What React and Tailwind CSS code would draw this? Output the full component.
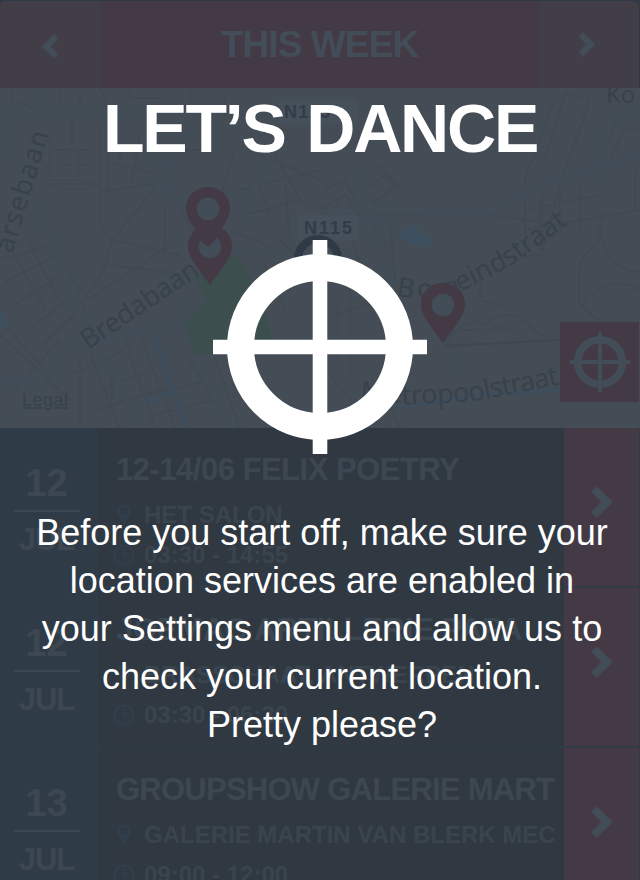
const sans = "font-['Liberation_Sans',Arial,sans-serif]";

const events = [
  { day: '12', month: 'JUL', title: '12-14/06 FELIX POETRY', place: 'HET SALON', time: '03:30 - 14:55', titleGap: 'tracking-[-0.5px]' },
  { day: '12', month: 'JUL', title: 'JOEMAC ARTILLERIE PAPA', place: 'BRASSCHAAT, ANTWERPEN', time: '03:30 - 06:30', titleGap: 'tracking-[-0.3px]' },
  { day: '13', month: 'JUL', title: 'GROUPSHOW GALERIE MART', place: 'GALERIE MARTIN VAN BLERK MEC', time: '09:00 - 12:00', titleGap: 'tracking-[-0.75px]' },
];

function Chevron({ className, left }) {
  return (
    <svg viewBox="0 0 24 32" className={className} fill="none" stroke="#424d58" strokeWidth="8">
      <path d={left ? 'M20 3 7 16 20 29' : 'M4 3 17 16 4 29'} />
    </svg>
  );
}

function Crosshair({ className, color }) {
  return (
    <svg viewBox="0 0 214 214" className={className} fill="none" stroke={color}>
      <circle cx="107" cy="107" r="79.5" strokeWidth="27" />
      <path d="M107 0V214M0 107H214" strokeWidth="14.6" />
    </svg>
  );
}

function Pin({ x, y }) {
  return (
    <g transform={`translate(${x} ${y})`}>
      <path
        fillRule="evenodd"
        fill="#443a46"
        d="M0 0C12.500 0 22 9.500 22 21.500C22 32 13 42 0 60C-13 42-22 32-22 21.500C-22 9.500-12.500 0 0 0ZM0 10.500A11.300 11.300 0 1 0 0 33.100A11.300 11.300 0 1 0 0 10.500Z"
      />
    </g>
  );
}

function CityMap() {
  return (
    <svg viewBox="0 88 640 340" className="block h-[340px] w-full bg-[#444c55]" fill="none">
      <g stroke="#414a53" strokeWidth="2">
        <path d="M12 88V100L42 112M60 88V104M80 92V112M100 88 110 112M130 88V98H160M190 88V105M225 95V120M50 140V180H78V150H50M62 150H90M58 165H88M62 190H84M72 120V145M100 128V184M100 184H42M100 184V225L112 240L104 270L80 305M100 192 160 183M108 150V190M118 145 145 150M112 163 150 172M120 140V170M140 135 132 180M160 183 112 240M112 240 180 255M110 265 190 275M88 300 170 245" />
        <path d="M0 260 50 245 80 290M12 250 45 310M28 242 62 305M5 282 55 256M14 305 70 270M30 330 78 290M42 345 85 305M0 320 40 365M0 335 70 400M15 390 60 340M80 360V428M70 375 125 350M90 355 120 428M100 390 150 370M95 410 175 385M125 340 155 428M140 335 175 428M112 365V400M150 395 210 380M155 415 215 400M190 360 230 428M210 345 240 428" />
        <path d="M160 183V150H210M165 205V255M180 210 205 250M235 150 210 230M260 155 320 180M240 190 320 170M255 175 270 215M245 215 300 200M285 185 290 240M270 145 300 200M230 230 280 250M280 240 300 260M265 265 285 310" />
        <path d="M320 210 345 195 360 215M325 190 345 180 355 200M335 205 350 220M365 190 385 175 398 190M380 165 398 185 370 205M345 220 360 265M370 222 390 250M390 220 395 280M380 215 470 212 540 222M525 255V215M540 200V250M525 230 640 210M560 190V235M580 182V228M525 210 600 195M635 170V210M525 255H542V195M525 255V178L555 100M542 250 560 185L590 100L565 93L545 160M605 150 615 120 640 105M608 165C620 140 622 120 640 130M602 228C600 250 580 250 579 270L579 303L600 322M600 220C600 260 620 270 640 272M582 305C600 280 625 280 640 290M325 310V350M338 300V360M335 315 380 300M320 340 385 340M350 290V375M445 342C455 330 470 315 485 325M485 325C495 315 510 310 525 322L545 338M455 330H478M490 332C500 325 510 328 518 335M480 280V300L502 306M330 375 350 400M380 380 400 428M350 410 390 428" />
      </g>
      <g stroke="#424d58" strokeWidth="7">
        <path d="M0 103 20 112 95 114 155 112 215 108 290 118 330 115" />
        <path d="M14 112V155L40 215L98 355 120 382 140 428M40 88V112M152 115 162 185 190 208 220 238M162 175 192 130M235 232 275 145M0 388 50 372 68 345 182 324M50 372 62 382M0 375 40 390 8 425M172 272 180 320 230 428M355 165 370 210M325 212 370 208 485 213 540 185 640 155M598 182V165L610 120 640 110M320 220 400 223" />
        <path d="M445 345C455 360 460 380 480 415M375 215 395 300M355 290 395 295M215 252 285 248" strokeWidth="4" />
        <circle cx="163" cy="184" r="7" strokeWidth="5" />
      </g>
      <path fill="#3d4e4e" d="M193 278 236 254 250 276 252 292 268 320 271 341 234 347 200 356Q195 356 193 351L184 325 206 303 204 294Z" />
      <path stroke="#3e4f5e" strokeWidth="6" d="M155 338 170 385 188 428M144 403 170 392M232 318 252 300" strokeOpacity=".7" />
      <path fill="#3d5060" d="M397 236 408 226 418 228 424 236 435 241 430 245 422 243 420 248 410 242Z M0 310 8 328 0 325Z" />
      <path stroke="#3e4e5c" strokeWidth="4" d="M380 402 400 406 430 403 500 393 560 390" />
      <path stroke="#3f4851" strokeWidth="2" d="M445 346 560 340" />
      <g fontSize="27" fill="#38424b" className="font-['Noto_Sans','Open_Sans',sans-serif]">
        <text transform="translate(12 254) rotate(-73)" textLength="126">arsebaan</text>
        <text transform="translate(88 350) rotate(-34)" textLength="136">Bredabaan</text>
        <text transform="translate(396 296) rotate(8)">B</text>
        <text transform="translate(418 299) rotate(-8)">o</text>
        <text transform="translate(434 300) rotate(-16)">r</text>
        <text transform="translate(446 298) rotate(-20)">g</text>
        <text transform="translate(460 292) rotate(-27)" textLength="55">eind</text>
        <text transform="translate(509 267) rotate(-36)" textLength="73">straat</text>
        <text transform="translate(360 400) rotate(4)" textLength="42">Me</text>
        <text transform="translate(402 405) rotate(-3)" textLength="68">tropo</text>
        <text transform="translate(470 402) rotate(-11)" textLength="91">olstraat</text>
        <text x="606" y="103" fontSize="24">Ko</text>
      </g>
      <g fontSize="18" fontWeight="700" className="font-['Liberation_Sans',Arial,sans-serif]">
        <rect x="279" y="99" width="79" height="25" rx="3" fill="#46505a" />
        <text x="284" y="118" fill="#323c47" textLength="46">N115</text>
        <rect x="299" y="215" width="59" height="26" rx="3" fill="#46505a" />
        <text x="304" y="234" fill="#323c47" textLength="48">N115</text>
      </g>
      <circle cx="318" cy="259" r="20" stroke="#2f3a46" strokeWidth="8" />
      <Pin x={208} y={187} />
      <circle cx="208" cy="209" r="11" fill="#424d57" />
      <Pin x={210} y={225} />
      <circle cx="210" cy="247" r="11" fill="#424d57" />
      <path d="M200 240 208.500 247 217 238 210 236Z" fill="#443a46" />
      <Pin x={443} y={283} />
      <circle cx="443" cy="305" r="11" fill="#424d57" />
      <text x="22" y="406" fontSize="18" fill="#38424b" textLength="46" textDecoration="underline" className="font-['Liberation_Sans',Arial,sans-serif]">Legal</text>
    </svg>
  );
}

function EventRow({ event }) {
  return (
    <div className="flex h-[160px] bg-[#2f3b46] pb-[2px] font-bold text-[#3d4751]">
      <div className="flex w-[98px] shrink-0 flex-col items-center bg-[#2f3b47] pr-[5px] pt-[35px]">
        <div className="text-[38px] leading-[40px]">{event.day}</div>
        <div className="mt-[7px] h-[2px] w-[66px] bg-[#3d4751]" />
        <div className="mt-[10px] text-[31px] leading-[36px] tracking-[-1px]">{event.month}</div>
      </div>
      <div className="w-[466px] shrink-0 overflow-hidden whitespace-nowrap bg-[#303942] pl-[18px] pt-[24px]">
        <div className={`text-[31px] leading-[36px] ${event.titleGap}`}>{event.title}</div>
        <div className="mt-[12px] flex h-[30px] items-center text-[24px] text-[#3a444e]">
          <svg viewBox="0 0 16 22" className="mr-[12px] h-[22px] w-[16px]" fill="#303e4b">
            <path fillRule="evenodd" d="M8 0A7.200 7.200 0 0 1 15 7.500C15 11 12.500 13 8 22C3.500 13 1 11 1 7.500A7.200 7.200 0 0 1 8 0ZM8 3.200A4.200 4.200 0 1 0 8 11.600A4.200 4.200 0 1 0 8 3.200Z" />
          </svg>
          {event.place}
        </div>
        <div className="mt-[10px] flex h-[30px] items-center text-[24px] text-[#3a444e]">
          <svg viewBox="0 0 22 22" className="-ml-[3px] mr-[9px] h-[22px] w-[22px]" fill="none" stroke="#303e4b" strokeWidth="2.500">
            <circle cx="11" cy="11" r="9.500" />
            <path d="M11 5V11H16" />
          </svg>
          {event.time}
        </div>
      </div>
      <div className="flex w-[75px] items-center justify-center bg-[#433a46]">
        <Chevron className="mt-[-11px] h-[32px] w-[24px]" />
      </div>
    </div>
  );
}

export default function App() {
  return (
    <div className={`relative h-[880px] w-[640px] overflow-hidden bg-[#303a46] ${sans}`}>
      <header className="flex h-[88px] pt-px">
        <div className="flex w-[100px] items-center justify-center rounded-tl-md bg-[#423e48]">
          <Chevron left className="mt-[3px] h-[25px] w-[20px]" />
        </div>
        <div className="flex w-[439px] items-center justify-center bg-[#433a46] text-[37px] font-bold tracking-[-0.9px] text-[#424d58]">
          THIS WEEK
        </div>
        <div className="flex w-[100px] items-center justify-center rounded-tr-md bg-[#423e48]">
          <Chevron className="-mt-px ml-[-4px] h-[25px] w-[20px]" />
        </div>
      </header>
      <div className="relative">
        <CityMap />
        <div className="absolute right-[1px] top-[234px] flex h-[80px] w-[79px] items-center justify-center bg-[#433a46]">
          <Crosshair className="h-[60px] w-[60px]" color="#424d58" />
        </div>
      </div>
      {events.map((event) => (
        <EventRow key={event.title} event={event} />
      ))}
      <section className="absolute inset-0 flex flex-col items-center text-center text-white">
        <h1 className="mt-[90px] whitespace-nowrap text-[68px] font-bold leading-[76px] tracking-[-2.2px] [word-spacing:5px]">LET’S DANCE</h1>
        <Crosshair className="mt-[74px] h-[214px] w-[214px]" color="#ffffff" />
        <p className="ml-[4px] mt-[55px] whitespace-nowrap text-[36px] leading-[48px]">
          Before you start off, make sure your
          <br />
          location services are enabled in
          <br />
          your Settings menu and allow us to
          <br />
          check your current location.
          <br />
          Pretty please?
        </p>
      </section>
    </div>
  );
}
